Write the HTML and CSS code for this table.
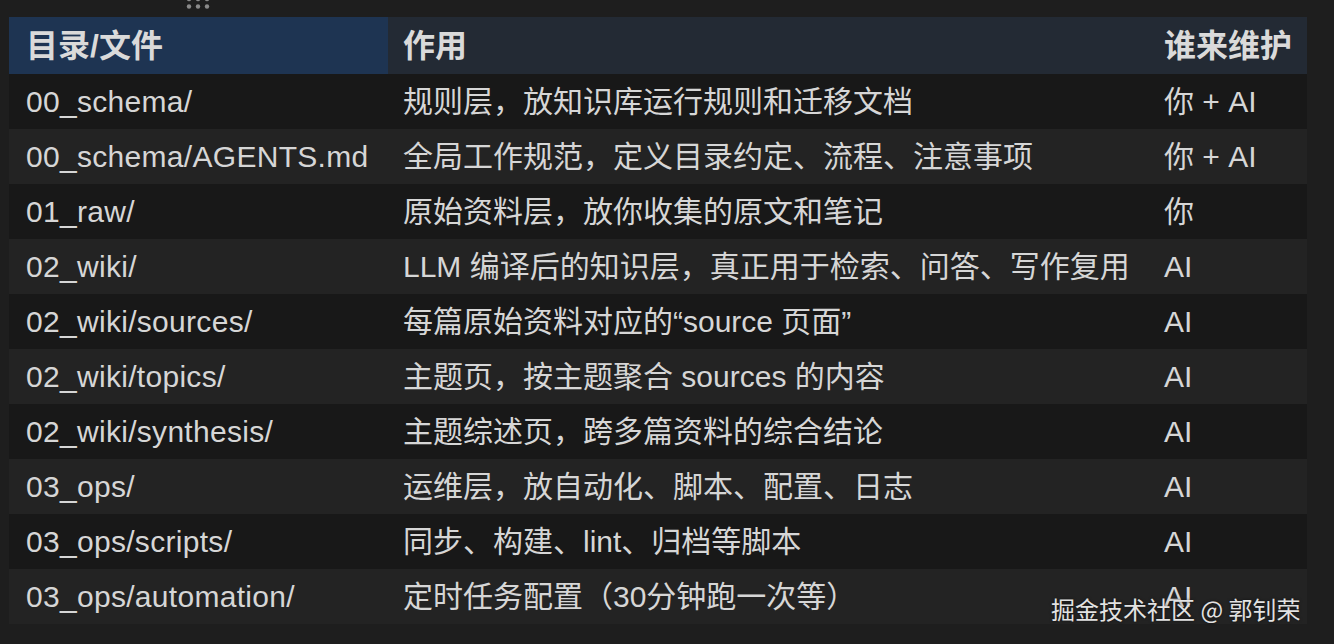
FILE: index.html
```html
<!DOCTYPE html>
<html lang="zh-CN">
<head>
<meta charset="utf-8">
<title>目录结构</title>
<link rel="stylesheet" href="styles.css">
</head>
<body>
<div class="page">
  <div class="grip-bar">
    <svg class="grip" width="26" height="12" viewBox="0 0 26 12">
      <circle cx="4" cy="-1" r="2.2"/><circle cx="13" cy="-1" r="2.2"/><circle cx="22" cy="-1" r="2.2"/>
      <circle cx="4" cy="6.5" r="2.2"/><circle cx="13" cy="6.5" r="2.2"/><circle cx="22" cy="6.5" r="2.2"/>
    </svg>
  </div>
  <table class="tbl">
    <colgroup><col class="c1"><col class="c2"><col class="c3"></colgroup>
    <thead>
      <tr><th class="h-sel">目录/文件</th><th>作用</th><th>谁来维护</th></tr>
    </thead>
    <tbody>
      <tr><td>00_schema/</td><td>规则层，放知识库运行规则和迁移文档</td><td>你 + AI</td></tr>
      <tr><td>00_schema/AGENTS.md</td><td>全局工作规范，定义目录约定、流程、注意事项</td><td>你 + AI</td></tr>
      <tr><td>01_raw/</td><td>原始资料层，放你收集的原文和笔记</td><td>你</td></tr>
      <tr><td>02_wiki/</td><td>LLM 编译后的知识层，真正用于检索、问答、写作复用</td><td>AI</td></tr>
      <tr><td>02_wiki/sources/</td><td>每篇原始资料对应的“source 页面”</td><td>AI</td></tr>
      <tr><td>02_wiki/topics/</td><td>主题页，按主题聚合 sources 的内容</td><td>AI</td></tr>
      <tr><td>02_wiki/synthesis/</td><td>主题综述页，跨多篇资料的综合结论</td><td>AI</td></tr>
      <tr><td>03_ops/</td><td>运维层，放自动化、脚本、配置、日志</td><td>AI</td></tr>
      <tr><td>03_ops/scripts/</td><td>同步、构建、lint、归档等脚本</td><td>AI</td></tr>
      <tr><td>03_ops/automation/</td><td>定时任务配置（30分钟跑一次等）</td><td>AI</td></tr>
    </tbody>
  </table>
  <div class="watermark">掘金技术社区 @ 郭钊荣</div>
</div>
</body>
</html>
```
FILE: styles.css
```css
html, body {
  margin: 0;
  padding: 0;
  background: #1e1e1e;
}
.page {
  position: relative;
  width: 1334px;
  height: 644px;
  overflow: hidden;
  font-family: "Liberation Sans", "Noto Sans CJK SC", sans-serif;
  color: #d6d6d6;
}
.grip-bar {
  height: 17px;
  padding-left: 185px;
  box-sizing: border-box;
}
.grip {
  display: block;
  fill: #8a8a8a;
}
.tbl {
  margin-left: 9px;
  width: 1298px;
  border-collapse: collapse;
  table-layout: fixed;
  font-size: 30px;
}
.c1 { width: 379px; }
.c2 { width: 760px; }
.c3 { width: 159px; }
.tbl th {
  height: 57px;
  padding: 0 0 0 15px;
  text-align: left;
  font-weight: bold;
  font-size: 32px;
  line-height: 1;
  background: #232a34;
  color: #dadada;
  white-space: nowrap;
  vertical-align: middle;
}
.tbl th.h-sel {
  background: #1e3452;
  padding-left: 17px;
}
.tbl th:last-child, .tbl td:last-child { padding-left: 16px; }
.tbl td {
  height: 55px;
  padding: 0 0 0 15px;
  white-space: nowrap;
  vertical-align: middle;
  line-height: 1;
}
.tbl td:first-child { padding-left: 17px; letter-spacing: 0.3px; }
.tbl tbody tr:nth-child(odd) { background: #181818; }
.tbl tbody tr:nth-child(even) { background: #232323; }
.watermark {
  position: absolute;
  left: 1051px;
  top: 593px;
  font-family: "Noto Sans CJK SC", sans-serif;
  font-size: 24px;
  line-height: 32px;
  color: #e2e2e2;
  text-shadow: 0 0 3px rgba(0,0,0,0.6);
}
```
